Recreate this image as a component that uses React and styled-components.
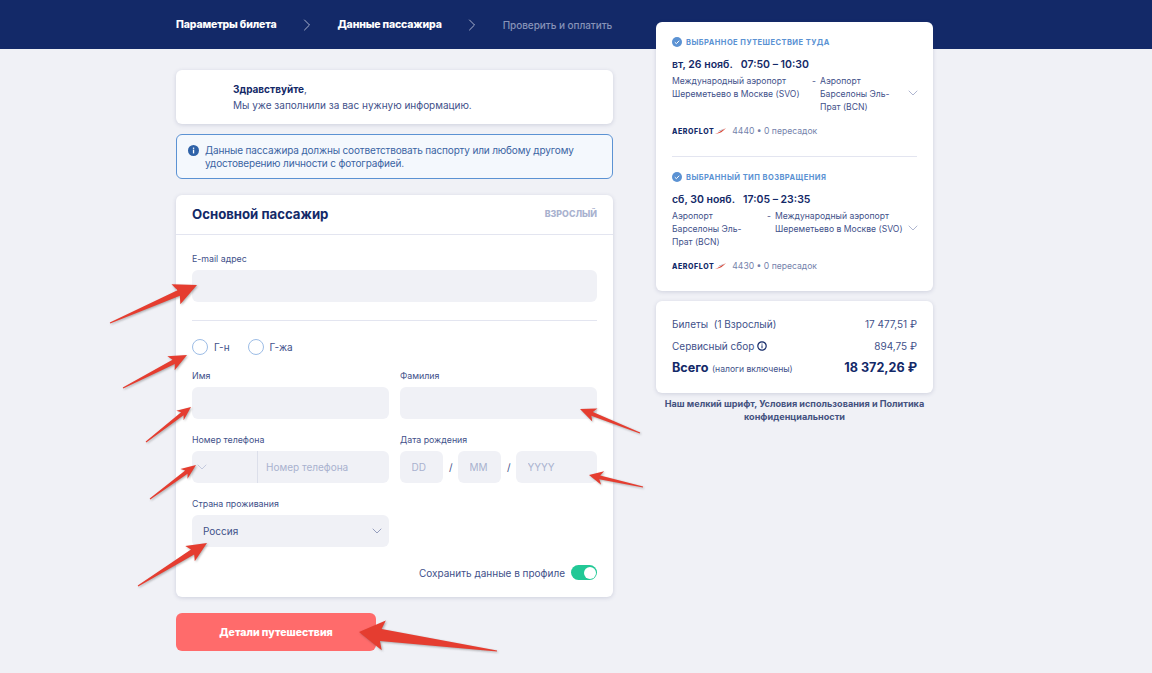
import React from "react";
import styled, { createGlobalStyle } from "styled-components";
import { ChevronDown, ChevronRight } from "lucide-react";

const NAVY = "#132968";
const BODY = "#42518a";
const MUTED = "#a9b2cf";
const BLUE = "#5b92d3";

const GlobalStyle = createGlobalStyle`
  html, body {
    margin: 0;
    padding: 0;
    background: #f0f1f6;
    font-family: "Inter", "Noto Sans", sans-serif;
    color: ${BODY};
  }
  * {
    box-sizing: border-box;
  }
`;

const arrows = [
  { tail: [110, 323], tip: [197, 285], head: 20, wide: 11, shaft: 3 },
  { tail: [123, 388], tip: [187, 355], head: 15, wide: 8, shaft: 2.5 },
  { tail: [146, 442], tip: [191, 407], head: 11, wide: 6, shaft: 2 },
  { tail: [150, 499], tip: [196, 465], head: 12, wide: 6, shaft: 2 },
  { tail: [138, 586], tip: [207, 543], head: 17, wide: 9, shaft: 3 },
  { tail: [640, 433], tip: [580, 409], head: 13, wide: 7, shaft: 2 },
  { tail: [643, 487], tip: [589, 475], head: 11, wide: 7, shaft: 2 },
  { tail: [497, 651], tip: [359, 632], head: 22, wide: 15, shaft: 6 },
];

// builds the annotation arrow outline from tail, tip and head sizes
const arrowPoints = ({ tail, tip, head, wide, shaft }) => {
  const dx = tip[0] - tail[0];
  const dy = tip[1] - tail[1];
  const len = Math.hypot(dx, dy);
  const ux = dx / len;
  const uy = dy / len;
  const bx = tip[0] - ux * head;
  const by = tip[1] - uy * head;
  const at = (x, y, side) => `${x - uy * side},${y + ux * side}`;
  return [
    at(tail[0], tail[1], 0.5),
    at(bx, by, shaft),
    at(bx - ux * 3, by - uy * 3, wide),
    `${tip[0]},${tip[1]}`,
    at(bx - ux * 3, by - uy * 3, -wide),
    at(bx, by, -shaft),
    at(tail[0], tail[1], -0.5),
  ].join(" ");
};

const CheckMark = () => (
  <svg width="10" height="10" viewBox="0 0 10 10">
    <circle cx="5" cy="5" r="5" fill={BLUE} />
    <path d="M2.8 5.2l1.6 1.5 2.8-3" fill="none" stroke="#fff" strokeWidth="1" />
  </svg>
);

const InfoFilled = () => (
  <svg width="11" height="11" viewBox="0 0 11 11">
    <circle cx="5.5" cy="5.5" r="5.5" fill="#2f62a8" />
    <rect x="4.9" y="4.6" width="1.3" height="3.8" fill="#fff" />
    <rect x="4.9" y="2.6" width="1.3" height="1.3" fill="#fff" />
  </svg>
);

const InfoOutline = () => (
  <svg width="10" height="10" viewBox="0 0 10 10">
    <circle cx="5" cy="5" r="4.2" fill="none" stroke={NAVY} strokeWidth="1.2" />
    <rect x="4.5" y="4.3" width="1" height="3" fill={NAVY} />
    <rect x="4.5" y="2.6" width="1" height="1" fill={NAVY} />
  </svg>
);

const Wing = () => (
  <svg width="11" height="6" viewBox="0 0 11 6">
    <path d="M0 6C3 5 7 2.5 11 0 8 3.5 5 5.5 0 6z" fill="#d8412f" />
    <path d="M3 3.2C5 2.8 7 1.8 8.5 .8 7 2.2 5 3 3 3.2z" fill={NAVY} />
  </svg>
);

const Flight = ({ title, date, time, from, to, fromWidth, number }) => (
  <>
    <SectionTitle>
      <CheckMark />
      {title}
    </SectionTitle>
    <DateLine>
      <span>{date}</span>
      <span>{time}</span>
    </DateLine>
    <Route>
      <Airport $width={fromWidth}>{from}</Airport>
      <Dash>-</Dash>
      <Airport>{to}</Airport>
      <RouteChevron size={16} strokeWidth={1.2} />
    </Route>
    <Carrier>
      <CarrierLogo>
        AEROFLOT
        <Wing />
      </CarrierLogo>
      {number} • 0 пересадок
    </Carrier>
  </>
);

export default function App() {
  return (
    <Page>
      <GlobalStyle />
      <MainColumn>
        <Steps>
          <Step>Параметры билета</Step>
          <StepChevron size={20} strokeWidth={1.1} />
          <Step>Данные пассажира</Step>
          <StepChevron size={20} strokeWidth={1.1} />
          <Step $muted>Проверить и оплатить</Step>
        </Steps>

        <HelloCard>
          <span>
            <strong>Здравствуйте</strong>,
          </span>
          <span>Мы уже заполнили за вас нужную информацию.</span>
        </HelloCard>

        <Notice>
          <InfoFilled />
          <p>
            Данные пассажира должны соответствовать паспорту или любому другому
            удостоверению личности с фотографией.
          </p>
        </Notice>

        <PassengerCard>
          <CardHead>
            <h2>Основной пассажир</h2>
            <span>ВЗРОСЛЫЙ</span>
          </CardHead>
          <Form>
            <Field>
              <Label>E-mail адрес</Label>
              <Input />
            </Field>
            <Divider />
            <Radios>
              <Radio>
                <i />
                Г-н
              </Radio>
              <Radio>
                <i />
                Г-жа
              </Radio>
            </Radios>
            <Grid>
              <Field>
                <Label>Имя</Label>
                <Input />
              </Field>
              <Field>
                <Label>Фамилия</Label>
                <Input />
              </Field>
              <Field>
                <Label>Номер телефона</Label>
                <PhoneBox>
                  <PhoneCode>
                    <ChevronDown size={16} strokeWidth={1.2} />
                  </PhoneCode>
                  <PhoneInput placeholder="Номер телефона" />
                </PhoneBox>
              </Field>
              <Field>
                <Label>Дата рождения</Label>
                <DateRow>
                  <DatePart $width={43} placeholder="DD" />
                  <span>/</span>
                  <DatePart $width={43} placeholder="MM" />
                  <span>/</span>
                  <DatePart placeholder="YYYY" />
                </DateRow>
              </Field>
              <Field>
                <Label>Страна проживания</Label>
                <SelectBox>
                  Россия
                  <ChevronDown size={16} strokeWidth={1.2} />
                </SelectBox>
              </Field>
            </Grid>
            <SaveRow>
              Сохранить данные в профиле
              <Toggle />
            </SaveRow>
          </Form>
        </PassengerCard>

        <SubmitButton>Детали путешествия</SubmitButton>
      </MainColumn>

      <SideColumn>
        <SideCard>
          <Flight
            title="ВЫБРАННОЕ ПУТЕШЕСТВИЕ ТУДА"
            date="вт, 26 нояб."
            time="07:50 – 10:30"
            fromWidth={140}
            from={
              <>
                Международный аэропорт
                <br />
                Шереметьево в Москве (SVO)
              </>
            }
            to={
              <>
                Аэропорт
                <br />
                Барселоны Эль-
                <br />
                Прат (BCN)
              </>
            }
            number="4440"
          />
          <SideDivider />
          <Flight
            title="ВЫБРАННЫЙ ТИП ВОЗВРАЩЕНИЯ"
            date="сб, 30 нояб."
            time="17:05 – 23:35"
            fromWidth={95}
            from={
              <>
                Аэропорт
                <br />
                Барселоны Эль-
                <br />
                Прат (BCN)
              </>
            }
            to={
              <>
                Международный аэропорт
                <br />
                Шереметьево в Москве (SVO)
              </>
            }
            number="4430"
          />
        </SideCard>

        <PriceCard>
          <PriceRow>
            <span>Билеты&nbsp; (1 Взрослый)</span>
            <span>17 477,51 ₽</span>
          </PriceRow>
          <PriceRow>
            <span>
              Сервисный сбор <InfoOutline />
            </span>
            <span>894,75 ₽</span>
          </PriceRow>
          <TotalRow>
            <span>
              <strong>Всего</strong> <small>(налоги включены)</small>
            </span>
            <strong>18 372,26 ₽</strong>
          </TotalRow>
        </PriceCard>

        <FinePrint>
          Наш мелкий шрифт, Условия использования и Политика конфиденциальности
        </FinePrint>
      </SideColumn>

      <Annotations viewBox="0 0 1152 673">
        {arrows.map((arrow) => (
          <polygon
            key={arrow.tip.join()}
            points={arrowPoints(arrow)}
            fill="#e53d30"
          />
        ))}
      </Annotations>
    </Page>
  );
}

const Page = styled.div`
  position: relative;
  display: flex;
  gap: 43px;
  height: 673px;
  padding-left: 176px;
  overflow: hidden;
  background: linear-gradient(${NAVY} 49px, #f0f1f6 49px);
`;

const MainColumn = styled.main`
  display: flex;
  flex-direction: column;
  width: 437px;
`;

const Steps = styled.nav`
  display: flex;
  align-items: center;
  gap: 20.5px;
  height: 49px;
  white-space: nowrap;
`;

const Step = styled.span`
  font-size: ${(p) => (p.$muted ? "10px" : "10.5px")};
  font-weight: ${(p) => (p.$muted ? 500 : 800)};
  letter-spacing: ${(p) => (p.$muted ? "-0.05px" : "-0.15px")};
  color: ${(p) => (p.$muted ? "#8793b8" : "#fff")};
`;

const StepChevron = styled(ChevronRight)`
  flex: none;
  color: #b7bed6;
`;

const Card = styled.section`
  background: #fff;
  border-radius: 6px;
  box-shadow: 0 1px 4px rgba(50, 60, 110, 0.18);
`;

const HelloCard = styled(Card)`
  display: flex;
  flex-direction: column;
  justify-content: center;
  gap: 4px;
  height: 54px;
  margin-top: 21px;
  padding-left: 57px;
  font-size: 10px;
  line-height: 12px;

  strong {
    font-weight: 700;
    color: ${NAVY};
  }
`;

const Notice = styled.div`
  display: flex;
  gap: 6px;
  height: 45px;
  margin-top: 10px;
  padding: 9px 11px;
  font-size: 10px;
  line-height: 13px;
  letter-spacing: -0.15px;
  color: #3a64a3;
  background: #f4f8fd;
  border: 1px solid ${BLUE};
  border-radius: 6px;

  svg {
    flex: none;
    margin-top: 1px;
  }

  p {
    margin: 0;
  }
`;

const PassengerCard = styled(Card)`
  height: 402px;
  margin-top: 16px;
`;

const CardHead = styled.header`
  display: flex;
  align-items: center;
  justify-content: space-between;
  height: 40px;
  padding: 0 16px 2px;
  border-bottom: 1px solid #e3e5f0;

  h2 {
    margin: 0;
    font-size: 13.2px;
    font-weight: 700;
    color: ${NAVY};
  }

  span {
    font-size: 8.8px;
    font-weight: 800;
    color: ${MUTED};
  }
`;

const Form = styled.div`
  padding: 18px 16px 0;
`;

const Field = styled.div`
  display: flex;
  flex-direction: column;
`;

const Label = styled.label`
  height: 12px;
  margin-bottom: 5px;
  font-size: 8.8px;
  line-height: 12px;
  color: ${BODY};
`;

const Input = styled.input`
  width: 100%;
  height: 32px;
  padding: 0 11.5px;
  font: inherit;
  font-size: 10px;
  background: #f0f1f6;
  border: 0;
  border-radius: 6px;
  outline: none;

  &::placeholder {
    color: ${MUTED};
    opacity: 1;
  }
`;

const Divider = styled.hr`
  height: 1px;
  margin: 18px 0;
  background: #e3e5f0;
  border: 0;
`;

const Radios = styled.div`
  display: flex;
  gap: 18px;
  height: 16px;
  margin-bottom: 15px;
`;

const Radio = styled.label`
  display: flex;
  align-items: center;
  gap: 6px;
  font-size: 10px;

  i {
    width: 16px;
    height: 16px;
    border: 1px solid #9dbde6;
    border-radius: 50%;
  }
`;

const Grid = styled.div`
  display: grid;
  grid-template-columns: 197px 197px;
  column-gap: 11px;
  row-gap: 15px;
`;

const PhoneBox = styled.div`
  display: flex;
  height: 32px;
  background: #f0f1f6;
  border-radius: 6px;
`;

const PhoneCode = styled.div`
  display: flex;
  align-items: center;
  flex: none;
  width: 66px;
  padding-left: 2px;
  color: #b9c0d8;
  border-right: 1px solid #dcdfea;
`;

const PhoneInput = styled(Input)`
  padding-left: 8px;
  background: none;
`;

const DateRow = styled.div`
  display: flex;
  align-items: center;
  gap: 6px;

  span {
    width: 3px;
    font-size: 10px;
    text-align: center;
  }
`;

const DatePart = styled(Input)`
  flex: ${(p) => (p.$width ? `0 0 ${p.$width}px` : "1")};
  width: ${(p) => (p.$width ? `${p.$width}px` : "auto")};
  min-width: 0;
`;

const SelectBox = styled.div`
  display: flex;
  align-items: center;
  justify-content: space-between;
  height: 32px;
  padding: 0 4px 0 11px;
  font-size: 10px;
  background: #f0f1f6;
  border-radius: 6px;

  svg {
    color: #7d89ae;
  }
`;

const SaveRow = styled.div`
  display: flex;
  align-items: center;
  justify-content: flex-end;
  gap: 6px;
  margin-top: 18px;
  font-size: 10px;
`;

const Toggle = styled.span`
  position: relative;
  width: 26px;
  height: 15px;
  background: #22c896;
  border-radius: 8px;

  &::after {
    content: "";
    position: absolute;
    top: 1.5px;
    right: 1.5px;
    width: 12px;
    height: 12px;
    background: #fff;
    border-radius: 50%;
  }
`;

const SubmitButton = styled.button`
  width: 200px;
  height: 38px;
  margin-top: 16px;
  font: inherit;
  font-size: 10.5px;
  font-weight: 800;
  color: #fff;
  background: #ff6b6b;
  border: 0;
  border-radius: 6px;
`;

const SideColumn = styled.aside`
  display: flex;
  flex-direction: column;
  width: 277px;
  padding-top: 22px;
`;

const SideCard = styled(Card)`
  height: 269px;
  padding: 14px 16px 0;
`;

const SectionTitle = styled.h3`
  display: flex;
  align-items: center;
  gap: 4px;
  height: 12px;
  margin: 0;
  font-size: 7.5px;
  font-weight: 700;
  letter-spacing: 0.45px;
  color: ${BLUE};
`;

const DateLine = styled.div`
  display: flex;
  gap: 8px;
  height: 16px;
  margin-top: 9px;
  font-size: 10.5px;
  font-weight: 600;
  line-height: 16px;
  color: ${NAVY};
`;

const Route = styled.div`
  position: relative;
  display: flex;
  margin-top: 2px;
  font-size: 8.6px;
  line-height: 13px;
  white-space: nowrap;
`;

const Airport = styled.div`
  width: ${(p) => (p.$width ? `${p.$width}px` : "auto")};
`;

const Dash = styled.span`
  width: 8px;
`;

const RouteChevron = styled(ChevronDown)`
  position: absolute;
  top: 10px;
  right: -4px;
  color: #9aa3c4;
`;

const Carrier = styled.div`
  display: flex;
  align-items: center;
  gap: 6px;
  height: 14px;
  margin-top: 10px;
  font-size: 8.6px;
  color: #7482ab;
`;

const CarrierLogo = styled.span`
  display: flex;
  align-items: center;
  gap: 1px;
  font-size: 7px;
  font-weight: 800;
  letter-spacing: 0.6px;
  color: ${NAVY};
`;

const SideDivider = styled.hr`
  height: 1px;
  margin: 18px 0 14px;
  background: #e3e5f0;
  border: 0;
`;

const PriceCard = styled(Card)`
  display: flex;
  flex-direction: column;
  gap: 9px;
  height: 92px;
  margin-top: 10px;
  padding: 16px 16px 0;
`;

const PriceRow = styled.div`
  display: flex;
  align-items: center;
  justify-content: space-between;
  height: 13px;
  font-size: 10px;

  svg {
    vertical-align: -1px;
  }
`;

const TotalRow = styled(PriceRow)`
  color: ${NAVY};
  font-size: 12.6px;

  strong {
    font-weight: 700;
  }

  small {
    font-size: 8.6px;
    color: ${BODY};
  }
`;

const FinePrint = styled.p`
  margin: 4px 0 0;
  font-size: 9.1px;
  font-weight: 700;
  line-height: 13px;
  text-align: center;
  color: #44527f;
`;

const Annotations = styled.svg`
  position: absolute;
  top: 0;
  left: 0;
  width: 1152px;
  height: 673px;
  pointer-events: none;
  filter: drop-shadow(1px 1.5px 1px rgba(60, 60, 60, 0.4));
`;
